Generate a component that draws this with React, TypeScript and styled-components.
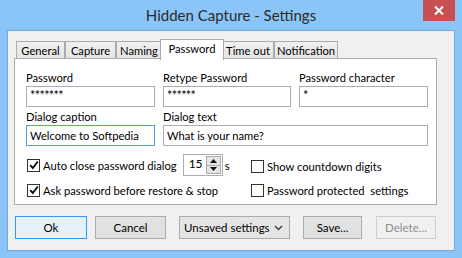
import React, { useState } from 'react'
import styled, { createGlobalStyle } from 'styled-components'

const GlobalStyle = createGlobalStyle`
  html, body {
    margin: 0;
    padding: 0;
    background: #8bc4f6;
  }
  * {
    box-sizing: border-box;
  }
`

const tabs = [
  { name: 'General', w: 49 },
  { name: 'Capture', w: 51 },
  { name: 'Naming', w: 46 },
  { name: 'Password', w: 60 },
  { name: 'Time out', w: 52 },
  { name: 'Notification', w: 64 },
]

export default function App() {
  const [active, setActive] = useState('Password')
  const [autoClose, setAutoClose] = useState(true)
  const [askRestore, setAskRestore] = useState(true)
  const [showDigits, setShowDigits] = useState(false)
  const [protect, setProtect] = useState(false)
  const [seconds, setSeconds] = useState(15)

  return (
    <>
      <GlobalStyle />
      <Window>
        <TitleBar>
          <Title>Hidden Capture - Settings</Title>
          <CloseBtn aria-label='Close'>
            <svg width='10' height='9' viewBox='0 0 10 9'>
              <path d='M1 0.5 L9 8.5 M9 0.5 L1 8.5' stroke='#fff' strokeWidth='2' />
            </svg>
          </CloseBtn>
        </TitleBar>
        <Client>
          <TabStrip>
            {tabs.map(t => (
              <Tab
                key={t.name}
                $w={t.w}
                $active={t.name === active}
                onClick={() => setActive(t.name)}
              >
                {t.name}
              </Tab>
            ))}
          </TabStrip>
          <Panel>
            <FieldGrid>
              <Field>
                <Label>Password</Label>
                <TextBox defaultValue='*******' $stars />
              </Field>
              <Field>
                <Label>Retype Password</Label>
                <TextBox defaultValue='******' $stars />
              </Field>
              <Field>
                <Label>Password character</Label>
                <TextBox defaultValue='*' $stars />
              </Field>
              <Field>
                <Label>Dialog caption</Label>
                <TextBox defaultValue='Welcome to Softpedia' $focused />
              </Field>
              <Field $span={2}>
                <Label>Dialog text</Label>
                <TextBox defaultValue='What is your name?' />
              </Field>
            </FieldGrid>
            <CheckGrid>
              <CheckRow>
                <Check checked={autoClose} onToggle={() => setAutoClose(!autoClose)} />
                <CheckText>Auto close password dialog</CheckText>
                <Spin>
                  <SpinValue>{seconds}</SpinValue>
                  <SpinButtons>
                    <SpinBtn onClick={() => setSeconds(seconds + 1)}>
                      <svg width='7' height='4' viewBox='0 0 7 4'>
                        <path d='M0 4 L3.5 0 L7 4 Z' fill='#111' />
                      </svg>
                    </SpinBtn>
                    <SpinBtn onClick={() => setSeconds(Math.max(0, seconds - 1))}>
                      <svg width='7' height='4' viewBox='0 0 7 4'>
                        <path d='M0 0 L3.5 4 L7 0 Z' fill='#111' />
                      </svg>
                    </SpinBtn>
                  </SpinButtons>
                </Spin>
                <Unit>s</Unit>
              </CheckRow>
              <CheckRow $shift={2}>
                <Check checked={showDigits} onToggle={() => setShowDigits(!showDigits)} />
                <CheckText>Show countdown digits</CheckText>
              </CheckRow>
              <CheckRow>
                <Check checked={askRestore} onToggle={() => setAskRestore(!askRestore)} />
                <CheckText>Ask password before restore &amp; stop</CheckText>
              </CheckRow>
              <CheckRow>
                <Check checked={protect} onToggle={() => setProtect(!protect)} />
                <CheckText>Password protected&nbsp; settings</CheckText>
              </CheckRow>
            </CheckGrid>
          </Panel>
          <ButtonRow>
            <Button $w={72} $gap={8} $default>Ok</Button>
            <Button $w={71} $gap={13}>Cancel</Button>
            <Combo>
              <span>Unsaved settings</span>
              <svg width='9' height='6' viewBox='0 0 9 6'>
                <path d='M1 1 L4.5 4.5 L8 1' stroke='#444' strokeWidth='1.5' fill='none' />
              </svg>
            </Combo>
            <Button $w={59} $gap={14}>Save...</Button>
            <Button $w={60} $gap={0} disabled>Delete...</Button>
          </ButtonRow>
        </Client>
      </Window>
    </>
  )
}

const Check = ({ checked, onToggle }: { checked: boolean; onToggle: () => void }) => (
  <CheckBox onClick={onToggle}>
    {checked && (
      <svg width='10' height='10' viewBox='0 0 10 10'>
        <path d='M1.2 5.2 L3.8 8 L8.8 1.5' stroke='#111' strokeWidth='1.9' fill='none' />
      </svg>
    )}
  </CheckBox>
)

const Window = styled.div`
  width: 462px;
  height: 258px;
  background: #8bc4f6;
  font-family: Lato, 'Noto Sans', sans-serif;
  font-size: 11.2px;
  color: #000;
  display: flex;
  flex-direction: column;
  padding: 0 7px 7px 7px;
`

const TitleBar = styled.div`
  height: 30px;
  display: flex;
  align-items: flex-start;
  justify-content: center;
  position: relative;
`

const Title = styled.div`
  font-size: 15px;
  color: #2b2b2b;
  margin-top: 6px;
`

const CloseBtn = styled.div`
  position: absolute;
  right: 0;
  top: 0;
  width: 32px;
  height: 21px;
  background: #c75050;
  display: flex;
  align-items: center;
  justify-content: center;
`

const Client = styled.div`
  flex: 1;
  background: #f0f0f0;
  border: 1px solid #73a8dc;
  padding: 8px 17px 0 6px;
  display: flex;
  flex-direction: column;
`

const TabStrip = styled.div`
  display: flex;
  align-items: flex-end;
  height: 20px;
  padding-left: 2px;
  position: relative;
  z-index: 1;
`

const Tab = styled.div<{ $active?: boolean; $w: number }>`
  width: ${p => (p.$active ? p.$w + 4 : p.$w)}px;
  height: ${p => (p.$active ? '21px' : '18px')};
  margin: ${p => (p.$active ? '0 -2px -1px -2px' : '0')};
  padding-top: 1px;
  text-align: center;
  border: 1px solid #acacac;
  border-bottom: ${p => (p.$active ? 'none' : '1px solid #acacac')};
  background: ${p => (p.$active ? '#fff' : 'linear-gradient(#f0f0f0, #e5e5e5)')};
  line-height: 15px;
  white-space: nowrap;
  cursor: default;
  position: relative;
  z-index: ${p => (p.$active ? 2 : 1)};
`

const Panel = styled.div`
  height: 147px;
  background: #fff;
  border: 1px solid #acacac;
  margin-top: -1px;
  padding: 12px 9px 0 11px;
`

const FieldGrid = styled.div`
  display: grid;
  grid-template-columns: 129px 128px 129px;
  column-gap: 8px;
  row-gap: 3px;
`

const Field = styled.div<{ $span?: number }>`
  display: flex;
  flex-direction: column;
  grid-column: span ${p => p.$span || 1};
`

const Label = styled.div`
  height: 15px;
  line-height: 13px;
`

const TextBox = styled.input<{ $focused?: boolean; $stars?: boolean }>`
  height: 21px;
  width: 100%;
  border: 1px solid ${p => (p.$focused ? '#569de5' : '#abadb3')};
  background: #fff;
  padding: ${p => (p.$stars ? '0 3px 2px 3px' : '0 3px')};
  font-family: inherit;
  font-size: ${p => (p.$stars ? '12.5px' : '11.2px')};
  letter-spacing: ${p => (p.$stars ? '-0.6px' : '0')};
  color: #000;
  outline: none;
`

const CheckGrid = styled.div`
  display: grid;
  grid-template-columns: 224px 1fr;
  grid-template-rows: 24px 26px;
  margin-top: 7px;
  padding-left: 1px;
`

const CheckRow = styled.div<{ $shift?: number }>`
  display: flex;
  align-items: center;
  padding-top: ${p => p.$shift || 0}px;
`

const CheckBox = styled.div`
  width: 13px;
  height: 13px;
  border: 1px solid #333;
  background: #fff;
  display: flex;
  align-items: center;
  justify-content: center;
  margin-right: 3px;
  flex-shrink: 0;
`

const CheckText = styled.span`
  white-space: nowrap;
`

const Spin = styled.div`
  margin-left: 6px;
  width: 40px;
  height: 22px;
  border: 1px solid #abadb3;
  background: #fff;
  display: flex;
  align-items: center;
  justify-content: space-between;
  padding: 1px 1px 1px 5px;
  flex-shrink: 0;
`

const SpinValue = styled.span`
  font-size: 12px;
  margin-top: -3px;
`

const SpinButtons = styled.div`
  display: flex;
  flex-direction: column;
  height: 100%;
  width: 15px;
`

const SpinBtn = styled.div`
  flex: 1;
  background: #e5e5e5;
  border: 1px solid #acacac;
  display: flex;
  align-items: center;
  justify-content: center;
  & + & {
    border-top: none;
  }
`

const Unit = styled.span`
  margin-left: 2px;
`

const ButtonRow = styled.div`
  display: flex;
  align-items: center;
  margin-top: 11px;
  padding-left: 1px;
`

const Button = styled.button<{ $w: number; $gap: number; $default?: boolean }>`
  width: ${p => p.$w}px;
  flex-shrink: 0;
  height: 23px;
  margin-right: ${p => p.$gap}px;
  border: 1px solid ${p => (p.$default ? '#3399ff' : '#adadad')};
  background: ${p => (p.$default ? '#e5f1fb' : '#e1e1e1')};
  font-family: inherit;
  font-size: 11.5px;
  color: #000;
  padding: 0;
  &:disabled {
    background: #f0f0f0;
    border-color: #cfcfcf;
    color: #8d8d8d;
  }
`

const Combo = styled.div`
  width: 111px;
  flex-shrink: 0;
  height: 23px;
  margin-right: 13px;
  border: 1px solid #acacac;
  background: #e5e5e5;
  display: flex;
  align-items: center;
  justify-content: space-between;
  padding: 0 6px 0 4px;
  font-size: 11.5px;
  white-space: nowrap;
`
